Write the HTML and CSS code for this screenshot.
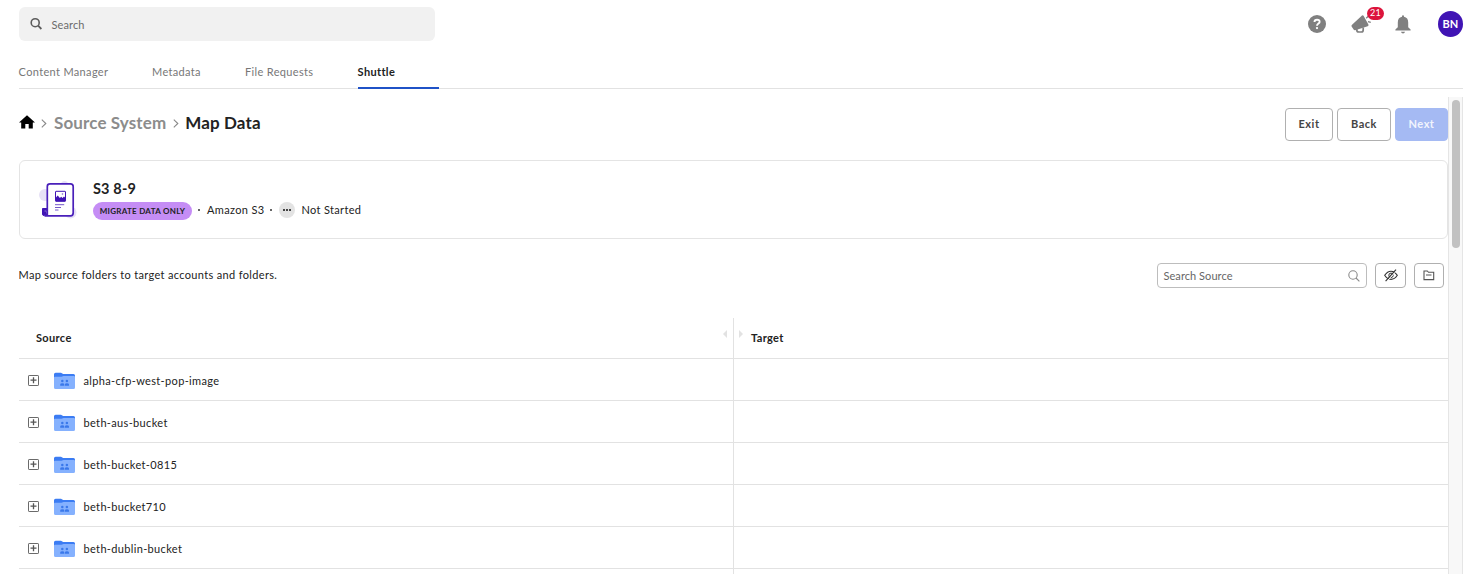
FILE: index.html
```html
<!DOCTYPE html>
<html lang="en">
<head>
<meta charset="utf-8">
<title>Shuttle - Map Data</title>
<link rel="stylesheet" href="styles.css">
</head>
<body>
<svg width="0" height="0" class="defs">
  <symbol id="expand" viewBox="0 0 11 11"><rect x=".5" y=".5" width="10" height="10" rx=".6" fill="#fff" stroke="#6a6a6a"/><path d="M2.500 5.200h6M5.500 2.300v6" stroke="#555" stroke-width="1.300"/></symbol>
  <symbol id="folder" viewBox="0 0 21 17"><path d="M0 2.200Q0 .7 1.600 .7H7l2.200 1.300H19.500Q21 2 21 3.500V8H0z" fill="#3b7cf3"/><path d="M0 5.600Q0 4.700 1 4.700H7.500L9.500 4H20Q21 4 21 5V15.500Q21 17 19.500 17H1.500Q0 17 0 15.500z" fill="#85b1fe"/><g fill="#3a78ea"><circle cx="8.300" cy="9" r="1.250"/><circle cx="12.900" cy="9" r="1.250"/><path d="M6.200 13.800v-1.200q0-1.400 2.100-1.400t2 1.400v1.200zM10.900 13.800v-1.200q0-1.400 2-1.400t2.100 1.400v1.200z"/></g></symbol>
</svg>
<header class="top">
  <div class="search">
    <svg width="13" height="13" viewBox="0 0 13 13" fill="none" stroke="#5c5c5c"><circle cx="5.200" cy="5.700" r="4" stroke-width="1.600"/><path d="M8.100 8.700l3.300 3.300" stroke-width="1.800"/></svg>
    <span>Search</span>
  </div>
  <div class="tools">
    <svg class="help" width="18" height="18" viewBox="0 0 18 18"><circle cx="9" cy="9" r="9" fill="#808080"/><path d="M6.500 7Q6.500 4.700 9.100 4.700T11.600 6.900C11.600 8.500 9 8.600 9 10.700" fill="none" stroke="#fff" stroke-width="1.900"/><circle cx="9" cy="13.100" r="1.150" fill="#fff"/></svg>
    <div class="news">
      <svg width="21" height="20" viewBox="0 0 21 20"><path d="M1.300 10.500L11 1.600Q12 .8 12.700 2L17.400 10.500Q18 11.800 16.700 12.200L4.200 16.200Q3.200 16.500 2.600 15.500L.6 12.500Q0 11.400 1.300 10.500z" fill="#808080"/><path d="M5.800 14.500V16Q5.800 18 7.800 18H10.400Q12.200 18 12.200 16V13.500" fill="none" stroke="#808080" stroke-width="1.700"/><path d="M15.200 4.200L18 1.500M17 7.700l2.800.7" stroke="#808080" stroke-width="1.300"/></svg>
      <span class="count">21</span>
    </div>
    <svg class="bell" width="16" height="19" viewBox="0 0 16 19"><path d="M7 1.200Q7 .3 8 .3T9 1.200V1.700Q13.200 2.500 13.200 7.500V12.200L15.600 14.600V15.500H.4V14.600L2.800 12.200V7.500Q2.800 2.500 7 1.700zM6 16.800H10Q9.700 18.500 8 18.500T6 16.800z" fill="#808080"/></svg>
    <div class="avatar">BN</div>
  </div>
</header>
<nav class="tabs">
  <a class="tab t1">Content Manager</a><a class="tab t2">Metadata</a><a class="tab t3">File Requests</a><a class="tab active">Shuttle</a>
</nav>
<div class="view">
  <main class="main">
    <div class="titlebar">
      <div class="crumbs">
        <svg class="home" width="16" height="14" viewBox="0 0 16 14"><path d="M8 .2L16 7.600H13.800V13.600H9.700V9H6.300V13.600H2.200V7.600H0z" fill="#000"/></svg>
        <svg class="chev" width="6" height="9" viewBox="0 0 6 9"><path d="M.8.7L4.800 4.500.8 8.300" fill="none" stroke="#888" stroke-width="1.100"/></svg>
        <span class="crumb">Source System</span>
        <svg class="chev second" width="6" height="9" viewBox="0 0 6 9"><path d="M.8.7L4.800 4.500.8 8.300" fill="none" stroke="#888" stroke-width="1.100"/></svg>
        <span class="crumb current">Map Data</span>
      </div>
      <div class="actions"><button class="btn exit">Exit</button><button class="btn back">Back</button><button class="btn next">Next</button></div>
    </div>
    <section class="card">
      <svg class="doc" width="40" height="40" viewBox="0 0 40 40"><g fill="#e6e1f6"><circle cx="6" cy="16" r="6"/><circle cx="25.500" cy="5.500" r="3.500"/><circle cx="31.500" cy="33.500" r="6"/></g><path d="M3.500 29.500H10V36.500H5Q3.500 36.500 3.500 35z" fill="#4014b4" stroke="#4014b4"/><path d="M5.500 32h2v2.500" fill="none" stroke="#8f78d6"/><path d="M5.500 36.300H8.300V7.500Q8.300 4.800 11 4.800H31.500Q34.200 4.800 34.200 7.500V33.700Q34.200 36.800 31.500 36.800H5.500" fill="#fff" stroke="#4a20ba" stroke-width="1.700"/><rect x="16.500" y="12.300" width="10" height="10" rx=".5" fill="#fff" stroke="#4014b4"/><path d="M16.500 22.300V19l2.200-2.600 2.200 2.600 1.300-1.200 1.300 1.200 1.500-1.500 1.500 1.500v3.300z" fill="#4014b4"/><circle cx="23.500" cy="15" r=".8" fill="#8060cf"/><path d="M16 25.700H25.200M16 28.500H22M16 31H19.500" stroke="#7458c9"/></svg>
      <div class="info">
        <h2>S3 8-9</h2>
        <div class="meta"><span class="pill">MIGRATE DATA ONLY</span><i class="dot"></i><span class="kind">Amazon S3</span><i class="dot"></i><span class="state"><i></i><i></i><i></i></span><span class="status">Not Started</span></div>
      </div>
    </section>
    <div class="bar">
      <p>Map source folders to target accounts and folders.</p>
      <div class="filters">
        <div class="find"><span>Search Source</span><svg width="12" height="12" viewBox="0 0 12 12" fill="none" stroke="#8a8a8a" stroke-width="1.100"><circle cx="5" cy="5" r="4.200"/><path d="M8 8l3.400 3.400"/></svg></div>
        <button class="sq eye"><svg width="14" height="13" viewBox="0 0 14 13" fill="none" stroke="#333"><path d="M.7 6.300Q3.400 2.200 7 2.200T13.300 6.300Q10.600 10.400 7 10.400T.7 6.300z" stroke-width="1.150"/><circle cx="7" cy="6.300" r="2.200"/><path d="M2.900 12.300L12.800 1.400" stroke="#fff"/><path d="M1.600 12.200L12 .6" stroke-width="1.150"/></svg></button>
        <button class="sq"><svg width="12" height="11" viewBox="0 0 12 11" fill="none" stroke="#555" stroke-width="1.100"><path d="M1 9.600V1H4.300L5.500 2.300H10.700V9.600zM3 5H8.500"/></svg></button>
      </div>
    </div>
    <div class="table">
      <div class="row head"><div class="cell"><b>Source</b><svg class="left" width="4" height="8" viewBox="0 0 4 8"><path d="M4 0v8L0 4z" fill="#e2e2e2"/></svg></div><div class="cell target"><svg class="right" width="4" height="8" viewBox="0 0 4 8"><path d="M0 0v8l4-4z" fill="#e2e2e2"/></svg><b>Target</b></div></div>
      <div class="row"><div class="cell"><svg class="plus"><use href="#expand"/></svg><svg class="folder"><use href="#folder"/></svg><span>alpha-cfp-west-pop-image</span></div><div class="cell target"></div></div>
      <div class="row"><div class="cell"><svg class="plus"><use href="#expand"/></svg><svg class="folder"><use href="#folder"/></svg><span>beth-aus-bucket</span></div><div class="cell target"></div></div>
      <div class="row"><div class="cell"><svg class="plus"><use href="#expand"/></svg><svg class="folder"><use href="#folder"/></svg><span>beth-bucket-0815</span></div><div class="cell target"></div></div>
      <div class="row"><div class="cell"><svg class="plus"><use href="#expand"/></svg><svg class="folder"><use href="#folder"/></svg><span>beth-bucket710</span></div><div class="cell target"></div></div>
      <div class="row"><div class="cell"><svg class="plus"><use href="#expand"/></svg><svg class="folder"><use href="#folder"/></svg><span>beth-dublin-bucket</span></div><div class="cell target"></div></div>
      <div class="row"><div class="cell"></div><div class="cell target"></div></div>
    </div>
  </main>
  <div class="track"><div class="thumb"></div></div>
</div>
</body>
</html>
```

FILE: styles.css
```css
* { box-sizing: border-box; }
body { margin: 0; height: 574px; overflow: hidden; background: #fff; color: #222; font: 11px/16px Lato, "Liberation Sans", sans-serif; letter-spacing: .34px; padding: 0 5px 0 19px; display: flex; flex-direction: column; }
svg { display: block; flex: none; }
.defs { position: absolute; }
.top { height: 48px; flex: none; display: flex; justify-content: space-between; align-items: center; }
.search { width: 416px; height: 34px; border-radius: 6px; background: #f1f1f1; display: flex; align-items: center; padding: 1px 0 0 11px; gap: 8.5px; color: #6b6b6b; }
.search svg { margin-top: -2px; }
.search span { letter-spacing: .1px; }
.tools { display: flex; align-items: center; }
.news { position: relative; margin-left: 25px; width: 21px; }
.count { position: absolute; left: 16px; top: -7px; width: 17px; height: 13px; border-radius: 7px; background: #dc143c; color: #fff; font-size: 9px; line-height: 12px; text-align: center; letter-spacing: .2px; }
.help { margin-right: 0; }
.bell { margin: 0 27px 0 23px; }
.avatar { width: 25px; height: 26px; border-radius: 50%; background: #4014b4; color: #fff; font-weight: 700; font-size: 11px; line-height: 26px; text-align: center; letter-spacing: .1px; }
.tabs { height: 41px; flex: none; border-bottom: 1px solid #e2e2e2; display: flex; color: #777; }
.tab { height: 41px; padding-top: 16px; text-indent: -.4px; }
.t1 { width: 133px; }
.t2 { width: 93px; text-indent: 0; }
.t3 { width: 113px; text-indent: 0; }
.active { width: 81px; color: #222; font-weight: 700; border-bottom: 2px solid #1f52c7; }
.view { margin-top: 8px; flex: 1; min-height: 0; display: flex; }
.main { width: 1429px; overflow: hidden; }
.track { width: 15px; background: #f8f8f8; border: solid #e5e5e5; border-width: 0 1px; padding: 3px 0 0 3px; }
.thumb { width: 8px; height: 148px; border-radius: 4px; background: #c1c1c1; }
.titlebar { height: 63px; padding-top: 11px; display: flex; justify-content: space-between; }
.crumbs { display: flex; height: 30px; align-items: center; font-size: 17px; font-weight: 700; line-height: 20px; letter-spacing: .12px; }
.home { margin-top: -2px; }
.chev { margin: 0 7px 0 6px; }
.second { margin: 0 6px 0 7px; }
.crumb { color: #8c8c8c; }
.current { color: #222; }
.actions { display: flex; gap: 4px; }
.btn { height: 33px; border: 1px solid #b0b0b0; border-radius: 4px; background: #fff; color: #444; font: inherit; font-weight: 700; padding: 0 0 2px; letter-spacing: .5px; }
.exit { width: 48px; }
.back { width: 54px; }
.next { width: 53px; background: #a5baf3; border-color: #a5baf3; color: #f1f4fd; }
.card { height: 79px; border: 1px solid #e4e4e4; border-radius: 6px; display: flex; padding: 18px 0 0 19px; }
.info { margin-left: 14px; }
h2 { margin: 1px 0 3px; font-size: 14.500px; line-height: 18px; font-weight: 700; letter-spacing: .15px; }
.meta { display: flex; align-items: center; height: 18px; }
.pill { height: 18px; width: 99px; margin-top: 2px; border-radius: 9px; background: #c58df5; font-size: 8px; line-height: 18px; text-align: center; font-weight: 700; letter-spacing: .28px; white-space: nowrap; }
.dot { width: 2px; height: 2px; background: #666; margin: 0 7px 0 6px; }
.state { width: 16px; height: 16px; border-radius: 50%; background: #e3e3e3; margin-right: 6px; display: flex; align-items: center; justify-content: center; gap: 1px; }
.state i { width: 2px; height: 2px; background: #444; }
.bar { height: 79px; display: flex; justify-content: space-between; padding: 24px 4px 0 0; }
p { margin: 4px 0 0; text-indent: -.5px; }
.filters { display: flex; }
.find { width: 210px; height: 25px; border: 1px solid #bdbdbd; border-radius: 4px; display: flex; justify-content: space-between; align-items: center; padding: 0 6px 0 5.500px; color: #666; letter-spacing: .06px; }
.sq { width: 30px; height: 25px; border: 1px solid #b0b0b0; border-radius: 4px; background: #fff; padding: 0; display: grid; place-items: center; margin-left: 8px; }
.eye { width: 31px; }
.eye svg { margin-top: -1px; }
.row { height: 42px; display: flex; border-bottom: 1px solid #e2e2e2; }
.head { height: 41px; }
.cell { width: 714px; display: flex; align-items: center; padding: 2px 6px 0 9px; }
.target { width: 715px; border-left: 1px solid #e2e2e2; }
.head .cell { padding: 0 6px 0 17px; justify-content: space-between; }
.head .target { padding-left: 5px; justify-content: flex-start; gap: 8px; }
.left, .right { margin-top: -8px; }
.plus { width: 11px; height: 11px; margin: -1px 15px 0 0; }
.folder { width: 21px; height: 17px; margin-right: 8.500px; }
```
